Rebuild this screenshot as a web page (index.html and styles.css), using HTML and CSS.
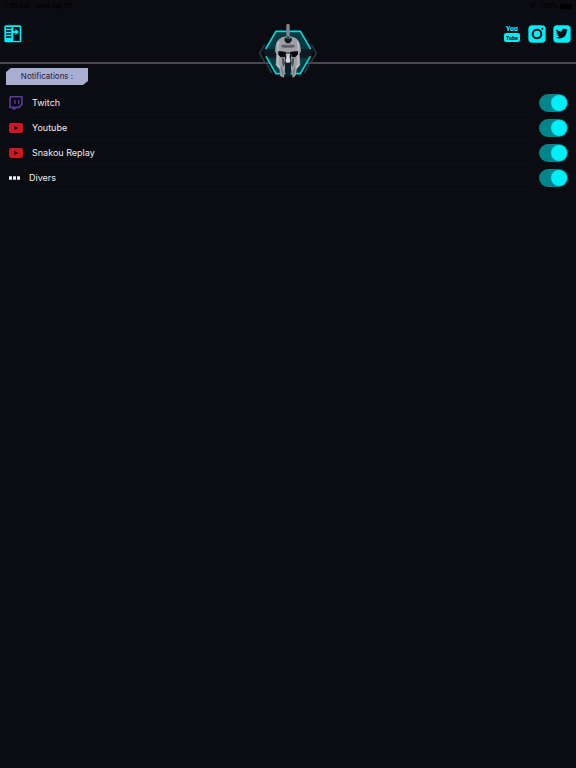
FILE: index.html
```
<!DOCTYPE html>
<html lang="fr">
<head>
    <meta charset="UTF-8">
    <meta name="viewport" content="width=device-width, initial-scale=1.0">
    <title>Notifications</title>
    <link rel="stylesheet" href="styles.css">
</head>
<body>

<div class="status-bar">
    <span>1:55 AM</span>
    <span>Wed Apr 29</span>
    <span class="status-right">
        <svg width="8" height="6" viewBox="0 0 24 18"><path d="M1 6a16 16 0 0 1 22 0M5 10a10 10 0 0 1 14 0" fill="none" stroke="currentColor" stroke-width="3"/><path d="M8 13a6 6 0 0 1 8 0l-4 5z" fill="currentColor"/></svg>
        <span>100%</span>
        <span class="battery"></span>
    </span>
</div>

<header class="top-bar">
    <button type="button" class="icon-button" aria-label="Menu">
        <svg width="18" height="18" viewBox="0 0 54 54">
            <path fill="currentColor" fill-rule="evenodd" d="M6 1H47Q52 1 52 6V47Q52 52 47 52H6Q1 52 1 47V6Q1 1 6 1ZM28 6V48H47V6Z"/>
            <path d="M6 9H22M6 18H22M6 27H22M6 36H22" stroke="#0b0b12" stroke-width="4"/>
            <path d="M22 21H38" stroke="currentColor" stroke-width="6"/>
            <path d="M34 11L45 21L34 31Z" fill="currentColor"/>
        </svg>
    </button>

    <svg class="logo" width="76" height="70" viewBox="0 0 228 210">
        <!-- outer frame -->
        <path d="M44 88L29 115L45 143M184 88L199 115L183 143M50 148L65 174M178 148L163 174" fill="none" stroke="#29363c" stroke-width="5"/>
        <path d="M78 49H151L188 112L151 176H78L41 112Z" fill="#063a40"/>
        <path d="M36 103H82V128H48ZM192 103H146V128H180Z" fill="#101820"/>
        <path d="M47 102L78 49H151L182 102M48 124L78 176H151L181 124" fill="none" stroke="#08d5dc" stroke-width="5"/>
        <!-- crest and helmet -->
        <path d="M109 29Q114 24 119 29V65H109Z" fill="#85858d"/>
        <path d="M107 64Q82 68 77 91L75 108L79 117L77 151L88 163L91 183L102 188L106 157L106 129H122L122 157L128 188L136 183L141 162L151 150L149 117L153 108L150 88Q144 67 121 64L114 73Z" fill="#9f9fa7"/>
        <path d="M87 79Q81 91 84 106M141 79Q148 91 144 106M84 120V151L96 163M144 120V151L132 163" stroke="#c4c4ca" stroke-width="4" fill="none"/>
        <path d="M105 67L112 71H118L124 67L126 76L119 85H109L103 76Z" fill="#17171d"/>
        <path d="M92 93Q100 88 114 89Q130 88 137 93L130 100Q114 96 98 100Z" fill="#74747c"/>
        <path d="M96 91Q113 100 132 91" fill="none" stroke="#36363e" stroke-width="2"/>
        <path d="M85 109Q102 107 114 113Q126 107 144 109V118L136 127L124 125V118H105V126L92 127L85 119Z" fill="#08090e"/>
        <path d="M105 118H123V155L121 185H107L105 155Z" fill="#0a2025"/>
        <path d="M96 129L102 130L105 144L101 156L97 148ZM132 129L126 130L123 144L127 156L131 148Z" fill="#4c4c54"/>
        <path d="M109 112L114 118L119 112V128Q124 139 118 143H110Q104 139 109 128Z" fill="#d6d6da"/>
        <path d="M93 155L99 180M135 155L129 180" stroke="#77777f" stroke-width="4"/>
    </svg>

    <nav class="socials">
        <a href="#" class="youtube" aria-label="YouTube">
            <span>You</span>
            <span class="tube">Tube</span>
        </a>
        <a href="#" aria-label="Instagram">
            <svg width="18" height="18" viewBox="0 0 54 54">
                <rect x="1" y="1" width="52" height="52" rx="12" fill="currentColor"/>
                <circle cx="27" cy="27" r="13" fill="none" stroke="#0b0b12" stroke-width="6"/>
                <circle cx="43" cy="11" r="3" fill="#0b0b12"/>
            </svg>
        </a>
        <a href="#" aria-label="Twitter">
            <svg width="18" height="18" viewBox="0 0 54 54">
                <rect x="1" y="1" width="52" height="52" rx="11" fill="currentColor"/>
                <path fill="#0b0b12" transform="translate(9 8) scale(1.5)" d="M23.6 4.6a9.700 9.700 0 0 1-2.800.8 4.900 4.900 0 0 0 2.100-2.700c-1 .6-2 1-3.100 1.200a4.900 4.900 0 0 0-8.400 4.500A14 14 0 0 1 1.300 3.200a4.900 4.900 0 0 0 1.500 6.600 4.900 4.900 0 0 1-2.200-.6v.1a4.900 4.900 0 0 0 3.900 4.800 5 5 0 0 1-2.200.1 4.900 4.900 0 0 0 4.600 3.400A9.900 9.900 0 0 1-.400 19.600a14 14 0 0 0 7.500 2.200c9.100 0 14-7.500 14-14v-.6a10 10 0 0 0 2.500-2.600z"/>
            </svg>
        </a>
    </nav>
</header>

<main>
    <h1 class="section-title">Notifications :</h1>

    <ul class="settings">
        <li>
            <svg width="14" height="14" viewBox="0 0 42 42">
                <path d="M5 2H39V25L30 34H21L14 40V34H3V9Z" fill="none" stroke="#5b3a9e" stroke-width="5"/>
                <path d="M18 12V24M29 12V24" stroke="#5b3a9e" stroke-width="4"/>
            </svg>
            <label for="twitch">Twitch</label>
            <input type="checkbox" id="twitch" class="toggle" checked>
        </li>
        <li>
            <svg width="14" height="10" viewBox="0 0 42 30"><rect width="42" height="30" rx="7" fill="#cd1820"/><path d="M16 9L28 15L16 21Z" fill="#160b10"/></svg>
            <label for="youtube">Youtube</label>
            <input type="checkbox" id="youtube" class="toggle" checked>
        </li>
        <li>
            <svg width="14" height="10" viewBox="0 0 42 30"><rect width="42" height="30" rx="7" fill="#cd1820"/><path d="M16 9L28 15L16 21Z" fill="#160b10"/></svg>
            <label for="replay">Snakou Replay</label>
            <input type="checkbox" id="replay" class="toggle" checked>
        </li>
        <li>
            <svg width="11" height="4" viewBox="0 0 33 12"><path d="M0 1H9V11H0ZM12 1H21V11H12ZM24 1H33V11H24Z" fill="#eeeeee"/></svg>
            <label for="divers">Divers</label>
            <input type="checkbox" id="divers" class="toggle" checked>
        </li>
    </ul>
</main>

</body>
</html>
```
FILE: styles.css
```
* {
    box-sizing: border-box;
}

body {
    margin: 0;
    min-height: 100vh;
    background-color: #0b0b12;
    color: #eeeeee;
    font-family: Inter, "Liberation Sans", sans-serif;
    font-size: 9px;
}

.status-bar {
    display: flex;
    align-items: center;
    gap: 6px;
    height: 12px;
    padding: 0 4px;
    color: #000000;
    font-family: Roboto, "Liberation Sans", sans-serif;
    font-size: 7px;
    line-height: 12px;
}

.status-right {
    display: flex;
    align-items: center;
    gap: 3px;
    margin-left: auto;
}

.battery {
    width: 12px;
    height: 5px;
    border-radius: 2px;
    background-color: #000000;
}

.top-bar {
    position: relative;
    display: flex;
    align-items: center;
    justify-content: space-between;
    height: 52px;
    padding: 0 5px 7px 4px;
    border-bottom: 2px solid #48484e;
}

.icon-button {
    padding: 0;
    border: none;
    background: none;
    color: #00eef8;
    cursor: pointer;
}

svg {
    display: block;
}

.logo {
    position: absolute;
    top: 3px;
    left: 50%;
    margin-left: -38px;
}

.socials {
    display: flex;
    align-items: center;
    gap: 7px;
}

.socials a {
    color: #00eef8;
    text-decoration: none;
}

.youtube {
    display: flex;
    flex-direction: column;
    align-items: center;
    width: 18px;
    font-family: "Roboto Condensed", "Open Sans Condensed", Roboto, sans-serif;
    font-weight: bold;
    font-size: 8px;
    line-height: 8px;
}

.tube {
    width: 16px;
    height: 9px;
    border-radius: 2px;
    background-color: #00eef8;
    color: #0b0b12;
    font-size: 6px;
    line-height: 9px;
    text-align: center;
}

.section-title {
    width: 82px;
    margin: 4px 0 5px 6px;
    background-color: #aaadd2;
    clip-path: polygon(5px 0, 100% 0, 100% 13px, 77px 100%, 0 100%, 0 4px);
    color: #22222e;
    font-size: 8px;
    font-weight: normal;
    line-height: 17px;
    text-align: center;
}

.settings {
    margin: 0;
    padding: 0;
    list-style: none;
}

.settings li {
    display: flex;
    align-items: center;
    gap: 9px;
    height: 25px;
    padding: 0 8px 0 9px;
}

.settings label {
    flex: 1;
    height: 25px;
    border-bottom: 1px solid #101017;
    line-height: 25px;
}

.toggle {
    appearance: none;
    width: 29px;
    height: 18px;
    margin: 0;
    border-radius: 9px;
    background-color: #00858b;
    cursor: pointer;
}

.toggle::before {
    content: "";
    display: block;
    width: 16px;
    height: 16px;
    margin: 1px;
    border-radius: 50%;
    background-color: #00eef8;
}

.toggle:checked::before {
    margin-left: 12px;
}
```
